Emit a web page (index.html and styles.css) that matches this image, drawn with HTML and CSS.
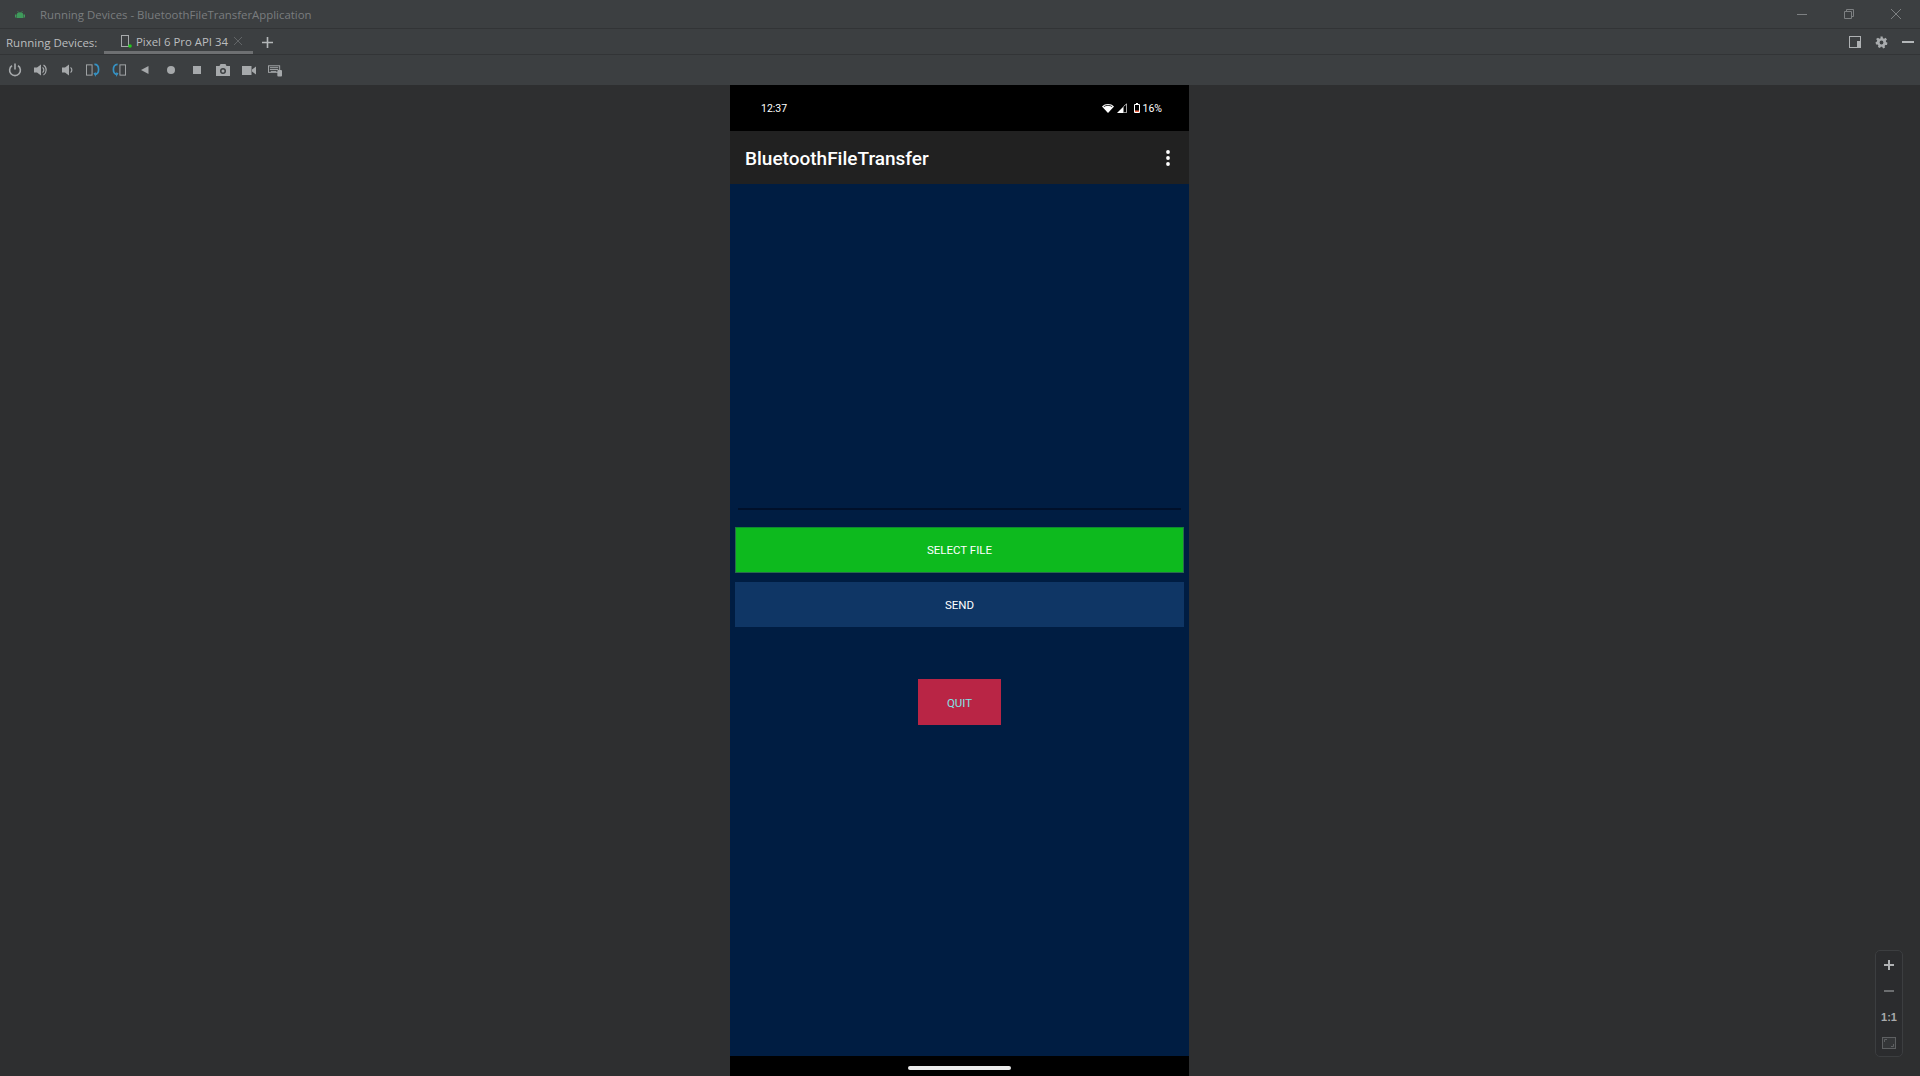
FILE: index.html
```html
<!DOCTYPE html>
<html lang="en">
<head>
  <meta charset="UTF-8" />
  <title>Running Devices - BluetoothFileTransferApplication</title>
  <link rel="stylesheet" href="styles.css">
</head>
<body>

  <div class="title-bar">
    <svg class="android-logo" width="10" height="7" viewBox="0 0 10 7">
      <path fill="#3f9a5b" d="M1.500 7V4.200C1.500 2.400 3 1.200 5 1.200s3.500 1.200 3.500 3V7z"/>
      <path stroke="#3f9a5b" stroke-width=".8" d="M2.600.2l.9 1.200M7.400.2L6.500 1.400"/>
      <rect x="0" y="3.500" width="1" height="3" fill="#3f9a5b"/>
      <rect x="9" y="3.500" width="1" height="3" fill="#3f9a5b"/>
    </svg>
    <span class="window-title">Running Devices - BluetoothFileTransferApplication</span>
    <div class="window-controls">
      <svg width="10" height="10" viewBox="0 0 10 10"><path stroke="#7d8082" d="M0 5.500h10"/></svg>
      <svg width="10" height="10" viewBox="0 0 10 10" fill="none"><path stroke="#7d8082" d="M.5 2.500h7v7h-7zM2.500 2.500v-2h7v7h-2"/></svg>
      <svg width="10" height="10" viewBox="0 0 10 10"><path stroke="#7d8082" d="M0 0l10 10M10 0L0 10"/></svg>
    </div>
  </div>

  <div class="tab-bar">
    <span class="tab-label">Running Devices:</span>
    <div class="tab">
      <svg width="12" height="14" viewBox="0 0 12 14" fill="none">
        <rect x="1.500" y="1.500" width="7" height="11" stroke="#a6a9ab"/>
        <circle cx="10" cy="12" r="1.800" fill="#22c81e"/>
      </svg>
      <span class="tab-name">Pixel 6 Pro API 34</span>
      <svg width="8" height="8" viewBox="0 0 8 8"><path stroke="#626567" d="M0 0l8 8M8 0L0 8"/></svg>
    </div>
    <svg class="tab-add" width="11" height="11" viewBox="0 0 11 11"><path stroke="#b4b7b9" stroke-width="1.600" d="M5.500 0v11M0 5.500h11"/></svg>
    <div class="tab-tools">
      <svg width="12" height="12" viewBox="0 0 12 12" fill="none">
        <rect x=".5" y=".5" width="11" height="11" stroke="#aeb1b3"/>
        <rect x="8" y="5" width="3" height="6" fill="#aeb1b3"/>
      </svg>
      <svg width="13" height="13" viewBox="0 0 24 24"><path fill="#a9acae" fill-rule="evenodd" d="M10 1h4l.6 3 2.200 1 2.700-1.600 2.600 3.200-2.100 2.100.4 2.300 2.600 1.500-.9 4-3 .1-1.400 1.900.9 2.900-3.700 1.800L13.200 20h-2.400l-1.700 2.300-3.700-1.800.9-2.900-1.400-1.900-3-.1-.9-4 2.600-1.500.4-2.300-2.100-2.100L5.500 3.400 8.200 5l2.200-1zM12 8.500a3.500 3.500 0 100 7 3.500 3.500 0 000-7z"/></svg>
      <svg width="12" height="2" viewBox="0 0 12 2"><path fill="#b4b7b9" d="M0 0h12v2H0z"/></svg>
    </div>
  </div>

  <div class="tool-bar">
    <svg width="14" height="14" viewBox="0 0 14 14" fill="none"><path stroke="#a6a9ab" stroke-width="1.600" d="M4 2.700a5.400 5.400 0 106 0M7 .5v6"/></svg>
    <svg width="14" height="14" viewBox="0 0 14 14" fill="none"><path fill="#a6a9ab" d="M0 4.500h3L7 1.500v11l-4-3H0z"/><path stroke="#a6a9ab" stroke-width="1.200" d="M8.500 4.500a3 3 0 010 5M9.500 2a6 6 0 010 10"/></svg>
    <svg width="14" height="14" viewBox="0 0 14 14"><path fill="#a6a9ab" d="M2 4.500h3L9 1.500v11l-4-3H2z"/><path stroke="#a6a9ab" stroke-width="1.200" fill="none" d="M10.500 4.500a3 3 0 010 5"/></svg>
    <svg width="14" height="14" viewBox="0 0 15 15" fill="none"><rect x=".5" y="2" width="6" height="11" stroke="#a6a9ab"/><path stroke="#3592c4" stroke-width="1.800" d="M9 1.500c3.500 0 4.500 2.500 4.500 5.500s-1 5-4 5.500"/><path fill="#3592c4" d="M8 11l2.500-1v5z"/></svg>
    <svg width="14" height="14" viewBox="0 0 15 15" fill="none"><rect x="8.500" y="2" width="6" height="11" stroke="#a6a9ab"/><path stroke="#3592c4" stroke-width="1.800" d="M6 1.500c-3.500 0-4.500 2.500-4.500 5.500s1 5 4 5.500"/><path fill="#3592c4" d="M7 11l-2.500-1v5z"/></svg>
    <svg width="14" height="14" viewBox="0 0 14 14"><path fill="#a6a9ab" d="M3 7l7.500-4v8z"/></svg>
    <svg width="14" height="14" viewBox="0 0 14 14"><circle cx="7" cy="7" r="4" fill="#a6a9ab"/></svg>
    <svg width="14" height="14" viewBox="0 0 14 14"><rect x="3" y="3" width="8" height="8" fill="#a6a9ab"/></svg>
    <svg width="14" height="14" viewBox="0 0 14 14"><path fill="#a6a9ab" fill-rule="evenodd" d="M0 3h3.500l1-2h5l1 2H14v10H0zM7 5a3 3 0 100 6 3 3 0 000-6z"/><circle cx="7" cy="8" r="1.500" fill="#a6a9ab"/></svg>
    <svg width="14" height="14" viewBox="0 0 14 14"><path fill="#a6a9ab" d="M0 3h9.500v9H0zM10 6.500L14 3.500v8l-4-3z"/></svg>
    <svg width="14" height="14" viewBox="0 0 15 14" fill="none"><rect x=".5" y="2.500" width="12" height="7" stroke="#a6a9ab"/><path stroke="#a6a9ab" d="M2 4.500h9M2 6.500h9"/><rect x="3" y="8" width="6" height="1" fill="#a6a9ab"/><rect x="10" y="7" width="5" height="7" rx="1" fill="#a6a9ab"/></svg>
  </div>

  <div class="device-area">
    <div class="phone">
      <div class="status-bar">
        <span class="clock">12:37</span>
        <div class="status-icons">
          <svg width="12" height="9" viewBox="0 0 12 9"><path fill="#fff" d="M0 2.500C3-.8 9-.8 12 2.500L6 9z"/><path fill="none" stroke="#000" stroke-width=".8" d="M1.800 2.700C4 .9 8 .9 10.200 2.700"/></svg>
          <svg class="signal" width="10" height="10" viewBox="0 0 10 10"><path fill="#fff" d="M0 10L6.500 3.500V10z"/><path fill="none" stroke="#fff" stroke-width=".7" d="M6.500 3.500L9.600.9v8.800H6.500"/></svg>
          <svg class="battery" width="6" height="10" viewBox="0 0 6 10" fill="none"><path stroke="#fff" d="M.5 1.500h5v8h-5z"/><path fill="#fff" d="M2 0h2v1H2z"/><path fill="#f26b4d" d="M1 7.500h4V9H1z"/></svg>
          <span class="battery-level">16%</span>
        </div>
      </div>
      <div class="app-bar">
        <span class="app-title">BluetoothFileTransfer</span>
        <svg width="4" height="16" viewBox="0 0 4 16"><circle cx="2" cy="2" r="1.900" fill="#fff"/><circle cx="2" cy="8" r="1.900" fill="#fff"/><circle cx="2" cy="14" r="1.900" fill="#fff"/></svg>
      </div>
      <div class="content">
        <div class="file-line"></div>
        <button class="btn btn-select">SELECT FILE</button>
        <button class="btn btn-send">SEND</button>
        <button class="btn btn-quit">QUIT</button>
      </div>
      <div class="nav-bar"><div class="home-pill"></div></div>
    </div>

    <div class="zoom-panel">
      <svg width="10" height="10" viewBox="0 0 10 10"><path stroke="#b0b2b4" stroke-width="2" d="M5 0v10M0 5h10"/></svg>
      <svg width="10" height="10" viewBox="0 0 10 10"><path stroke="#6c6e70" stroke-width="2" d="M0 5h10"/></svg>
      <span class="zoom-reset">1:1</span>
      <svg width="14" height="12" viewBox="0 0 14 12" fill="none"><rect x=".5" y=".5" width="13" height="11" stroke="#5e6062" fill="#343638"/><path stroke="#5e6062" d="M2.500 5V2.500H5M11.500 7v2.500H9"/></svg>
    </div>
  </div>

</body>
</html>
```

FILE: styles.css
```css
* {
  box-sizing: border-box;
}
html, body {
  height: 100%;
}
body {
  margin: 0;
  display: flex;
  flex-direction: column;
  background: #2e2f30;
  font-family: 'Open Sans', 'Noto Sans', sans-serif;
  overflow: hidden;
}
svg {
  display: block;
  flex: none;
}
.title-bar {
  height: 29px;
  flex: none;
  display: flex;
  align-items: center;
  padding-left: 15px;
  background: #3c3f41;
  border-bottom: 1px solid #323436;
}
.android-logo {
  margin-right: 15px;
}
.window-title {
  font-size: 11.4px;
  color: #7a7d7f;
}
.window-controls {
  margin-left: auto;
  display: flex;
  gap: 37px;
  padding-right: 19px;
}
.tab-bar {
  height: 26px;
  flex: none;
  display: flex;
  align-items: center;
  padding-left: 6px;
  background: #3c3f41;
  border-bottom: 1px solid #323436;
}
.tab-label {
  font-size: 11.5px;
  color: #bbbdbf;
  width: 98px;
  margin-top: 2px;
}
.tab {
  height: 25px;
  width: 149px;
  padding: 2px 0 0 16px;
  display: flex;
  align-items: center;
  gap: 4px;
  border-bottom: 3px solid #6e7072;
}
.tab-name {
  font-size: 11.4px;
  color: #bbbdbf;
  margin-right: 2px;
}
.tab-add {
  margin: 2px 0 0 9px;
}
.tab-tools {
  margin: 1px 0 0 auto;
  display: flex;
  align-items: center;
  gap: 14px;
  padding-right: 6px;
}
.tool-bar {
  height: 30px;
  flex: none;
  display: flex;
  align-items: center;
  gap: 12px;
  padding: 0 0 1px 8px;
  background: #3c3f41;
}
.device-area {
  flex: 1;
  min-height: 0;
  position: relative;
  display: flex;
  justify-content: center;
}
.phone {
  width: 459px;
  margin-left: -1px;
  display: flex;
  flex-direction: column;
  background: #000;
  font-family: Roboto, sans-serif;
}
.status-bar {
  height: 46px;
  flex: none;
  display: flex;
  align-items: center;
  justify-content: space-between;
  padding: 0 27px 0 31px;
  color: #fff;
  font-size: 10.5px;
}
.status-icons {
  display: flex;
  align-items: center;
}
.signal {
  margin-left: 3px;
}
.battery {
  margin-left: 7px;
}
.battery-level {
  margin-left: 3px;
}
.app-bar {
  height: 53px;
  flex: none;
  display: flex;
  align-items: center;
  justify-content: space-between;
  padding: 0 19px 0 15px;
  background: #212121;
}
.app-title {
  font-size: 19px;
  font-weight: 500;
  color: #fff;
  padding-top: 1px;
}
.content {
  flex: 1;
  min-height: 0;
  display: flex;
  flex-direction: column;
  padding: 324px 5px 0;
  background: #001d42;
}
.file-line {
  height: 2px;
  margin: 0 3px 17px;
  background: #00102a;
}
.btn {
  display: block;
  height: 46px;
  border: 0;
  padding: 0;
  color: #fff;
  font-family: Roboto, sans-serif;
  font-size: 11.5px;
  font-weight: 400;
}
.btn-select {
  background: #0dba1e;
  border: 1px solid #2a6a4d;
  border-top-color: #0e8a30;
}
.btn-send {
  height: 45px;
  margin-top: 9px;
  background: #0f3665;
}
.btn-quit {
  width: 83px;
  margin: 52px auto 0;
  padding-top: 1px;
  background: #b92545;
  color: #7fe3e6;
}
.nav-bar {
  height: 20px;
  flex: none;
  display: flex;
  justify-content: center;
  padding-top: 10px;
}
.home-pill {
  width: 103px;
  height: 4px;
  border-radius: 2px;
  background: #ececec;
}
.zoom-panel {
  position: absolute;
  right: 17px;
  bottom: 19px;
  width: 28px;
  height: 107px;
  display: grid;
  grid-auto-rows: 26px;
  justify-items: center;
  align-items: center;
  padding-top: 1px;
  background: #2b2c2e;
  border: 1px solid #3c3e40;
  border-radius: 5px;
}
.zoom-reset {
  font-family: 'Liberation Sans', sans-serif;
  font-size: 11px;
  font-weight: 700;
  color: #a9abad;
}
```
